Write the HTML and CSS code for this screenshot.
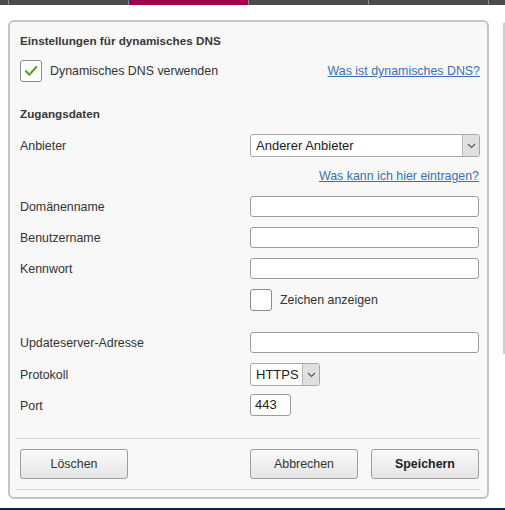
FILE: index.html
```html
<!DOCTYPE html>
<html lang="de">
<head>
<meta charset="utf-8">
<title>Dynamisches DNS</title>
<link rel="stylesheet" href="styles.css">
</head>
<body>
<div class="topbar">
  <div class="tab tab-first"></div>
  <div class="tab"></div>
  <div class="tab tab-active"></div>
  <div class="tab"></div>
  <div class="tab"></div>
  <div class="tab tab-last"></div>
</div>
<div class="stage">
  <div class="panel">
    <div class="title">Einstellungen für dynamisches DNS</div>
    <div class="row row-cb">
      <label class="cb-label">
        <span class="cb">
          <svg width="22" height="22" viewBox="0 0 22 22"><path d="M5.5 11.2 L9.3 15 L16.8 6.6" fill="none" stroke="#5b9a2e" stroke-width="2.3" stroke-linecap="round" stroke-linejoin="round"/></svg>
        </span>
        <span>Dynamisches DNS verwenden</span>
      </label>
      <a class="link" href="#">Was ist dynamisches DNS?</a>
    </div>
    <div class="section">Zugangsdaten</div>
    <div class="row row-select">
      <span class="label">Anbieter</span>
      <div class="select select-wide">
        <span class="select-value">Anderer Anbieter</span>
        <span class="select-arrow"><svg width="9" height="6" viewBox="0 0 9 6"><path d="M1 1 L4.5 4.5 L8 1" fill="none" stroke="#555" stroke-width="1.1"/></svg></span>
      </div>
    </div>
    <div class="row row-link"><a class="link" href="#">Was kann ich hier eintragen?</a></div>
    <div class="row row-input first-input">
      <span class="label">Domänenname</span>
      <span class="input input-wide"></span>
    </div>
    <div class="row row-input">
      <span class="label">Benutzername</span>
      <span class="input input-wide"></span>
    </div>
    <div class="row row-input">
      <span class="label">Kennwort</span>
      <span class="input input-wide"></span>
    </div>
    <div class="row row-cb2">
      <span class="label"></span>
      <label class="cb-label">
        <span class="cb"></span>
        <span>Zeichen anzeigen</span>
      </label>
    </div>
    <div class="row row-input row-update">
      <span class="label">Updateserver-Adresse</span>
      <span class="input input-wide"></span>
    </div>
    <div class="row row-proto">
      <span class="label">Protokoll</span>
      <div class="select select-small">
        <span class="select-value">HTTPS</span>
        <span class="select-arrow"><svg width="9" height="6" viewBox="0 0 9 6"><path d="M1 1 L4.5 4.5 L8 1" fill="none" stroke="#555" stroke-width="1.1"/></svg></span>
      </div>
    </div>
    <div class="row row-port">
      <span class="label">Port</span>
      <span class="input input-port">443</span>
    </div>
    <div class="divider divider-top"></div>
    <div class="buttons">
      <button class="btn">Löschen</button>
      <div class="btn-group">
        <button class="btn">Abbrechen</button>
        <button class="btn btn-primary">Speichern</button>
      </div>
    </div>
    <div class="divider divider-bottom"></div>
  </div>
  <div class="side-panel"></div>
</div>
<div class="footer"></div>
</body>
</html>
```
FILE: styles.css
```css
html, body {
  margin: 0;
  padding: 0;
}
body {
  width: 505px;
  height: 510px;
  overflow: hidden;
  display: flex;
  flex-direction: column;
  background: #ffffff;
  font-family: "Liberation Sans", Arial, sans-serif;
  font-size: 12.4px;
  color: #333333;
}
.topbar {
  display: flex;
  height: 5px;
  background: #4b4b4b;
  flex-shrink: 0;
}
.tab {
  width: 119px;
  border-left: 1px solid #8a8a8a;
  height: 5px;
}
.tab-first {
  width: 8px;
  border-left: none;
}
.tab-active {
  background: #a0004e;
}
.tab-last {
  width: 16px;
}
.stage {
  display: flex;
  align-items: flex-start;
  margin-top: 15px;
}
.panel {
  margin-left: 8px;
  width: 463px;
  border: 2px solid #c4c4c4;
  border-radius: 6px;
  background: #f8f8f8;
  padding: 10px 7px 7px 10px;
  display: flex;
  flex-direction: column;
}
.side-panel {
  margin-left: 14px;
  margin-top: 2px;
  width: 6px;
  height: 331px;
  border-left: 2px solid #cfcfcf;
  border-top: 1px solid #e4e4e4;
  border-top-left-radius: 4px;
  background: #fbfbfb;
}
.title {
  font-weight: bold;
  font-size: 11.7px;
  line-height: 18px;
  height: 18px;
  color: #383838;
}
.row {
  display: flex;
  align-items: center;
}
.label {
  width: 230px;
  flex-shrink: 0;
  padding-top: 1px;
}
.row-cb {
  margin-top: 10px;
  height: 22px;
  justify-content: space-between;
}
.cb-label {
  display: flex;
  align-items: center;
  gap: 8px;
}
.cb {
  width: 20px;
  height: 20px;
  border: 1px solid #8c8c8c;
  border-radius: 3px;
  background: #ffffff;
  display: flex;
  align-items: center;
  justify-content: center;
  flex-shrink: 0;
}
.cb svg {
  display: block;
}
.link {
  color: #3a70b5;
  text-decoration: underline;
}
.section {
  margin-top: 23px;
  font-weight: bold;
  font-size: 11.7px;
  line-height: 18px;
  height: 18px;
  color: #383838;
}
.row-select {
  margin-top: 11px;
  height: 23px;
}
.select {
  display: flex;
  height: 21px;
  border: 1px solid #a8a8a8;
  border-radius: 3px;
  background: #ffffff;
  box-sizing: content-box;
  overflow: hidden;
}
.select-wide {
  width: 228px;
}
.select-small {
  width: 68px;
}
.select-value {
  flex: 1;
  padding-left: 5px;
  line-height: 21px;
  font-size: 13px;
  color: #222222;
}
.select-arrow {
  width: 16px;
  background: #e0e0e0;
  border-left: 1px solid #b8b8b8;
  display: flex;
  align-items: center;
  justify-content: center;
}
.row-link {
  margin-top: 10px;
  height: 18px;
  justify-content: flex-end;
  margin-right: 1px;
}
.row-input {
  margin-top: 10px;
  height: 21px;
}
.first-input {
  margin-top: 11px;
}
.input {
  height: 19px;
  border: 1px solid #9c9c9c;
  border-radius: 3px;
  background: #ffffff;
  display: block;
}
.input-wide {
  width: 227px;
}
.input-port {
  line-height: 20px;
  padding-left: 4px;
  box-sizing: border-box;
  width: 41px;
  height: 22px;
  font-size: 13px;
  color: #222222;
}
.row-cb2 {
  margin-top: 10px;
  height: 22px;
}
.row-update {
  margin-top: 21px;
}
.row-proto {
  margin-top: 10px;
  height: 23px;
}
.row-port {
  margin-top: 8px;
  height: 22px;
}
.divider {
  height: 1px;
  background: #d4d4d4;
  margin-left: -4px;
}
.divider-top {
  margin-top: 22px;
}
.divider-bottom {
  margin-top: 10px;
}
.buttons {
  display: flex;
  justify-content: space-between;
  margin-top: 10px;
  height: 30px;
  margin-right: 1px;
}
.btn-group {
  display: flex;
  gap: 13px;
}
.btn {
  width: 108px;
  height: 30px;
  border: 1px solid #9d9d9d;
  border-radius: 3px;
  background: linear-gradient(#fbfbfb, #e4e4e4);
  font-family: "Liberation Sans", Arial, sans-serif;
  font-size: 12.4px;
  color: #333333;
  padding: 0;
}
.btn-primary {
  font-weight: bold;
  color: #222222;
}
.footer {
  margin-top: auto;
  height: 2px;
  background: #0d1f5a;
  flex-shrink: 0;
}
```
